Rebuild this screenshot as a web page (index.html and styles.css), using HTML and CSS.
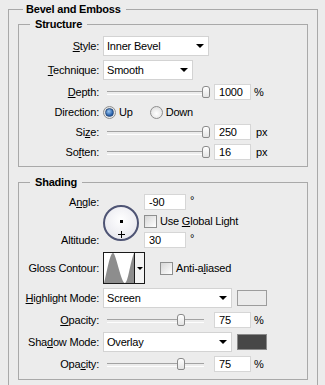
FILE: index.html
```html
<!DOCTYPE html>
<html>
<head>
<meta charset="utf-8">
<link rel="stylesheet" href="styles.css">
</head>
<body>
<fieldset class="group outer">
  <legend class="title">Bevel and Emboss</legend>

  <fieldset class="group sub structure">
    <legend class="subtitle">Structure</legend>
    <div class="form form-structure">
      <div class="lbl"><u>S</u>tyle:</div>
      <div class="ctl"><div class="select w-style"><span>Inner Bevel</span><i class="arrow"></i></div></div>

      <div class="lbl"><u>T</u>echnique:</div>
      <div class="ctl"><div class="select w-tech"><span>Smooth</span><i class="arrow"></i></div></div>

      <div class="lbl"><u>D</u>epth:</div>
      <div class="ctl"><div class="slider"><span class="thumb" style="left:99px"></span></div><div class="num">1000</div><span class="unit">%</span></div>

      <div class="lbl">Direction:</div>
      <div class="ctl"><span class="radio on"></span><span class="opt">Up</span><span class="radio second"></span><span class="opt">Down</span></div>

      <div class="lbl">Si<u>z</u>e:</div>
      <div class="ctl"><div class="slider"><span class="thumb" style="left:99px"></span></div><div class="num">250</div><span class="unit px">px</span></div>

      <div class="lbl">So<u>f</u>ten:</div>
      <div class="ctl"><div class="slider"><span class="thumb" style="left:99px"></span></div><div class="num">16</div><span class="unit px">px</span></div>
    </div>
  </fieldset>

  <fieldset class="group sub shading">
    <legend class="subtitle">Shading</legend>
    <div class="form form-shading">
      <div class="lbl stack"><span>A<u>n</u>gle:</span><span>Altitude:</span></div>
      <div class="ctl angle">
        <div class="dial"><i class="dot"></i><i class="cross"></i></div>
        <div class="angle-fields">
          <div class="field"><div class="num short">-90</div><span class="deg">°</span></div>
          <div class="check"><span class="box"></span><span>Use <u>G</u>lobal Light</span></div>
          <div class="field"><div class="num short">30</div><span class="deg">°</span></div>
        </div>
      </div>

      <div class="lbl">Gloss Contour:</div>
      <div class="ctl">
        <div class="contour">
          <svg class="curve" width="30" height="30" viewBox="0 0 30 30">
            <path d="M0 30 C3 18 6 0 9 0 C12 0 17 30 21 30 C24 30 26 10 30 0 L30 30 Z" fill="#8d8d8d"/>
          </svg>
          <span class="cdrop"><i class="arrow small"></i></span>
        </div>
        <div class="check aa"><span class="box"></span><span>Anti-a<u>l</u>iased</span></div>
      </div>

      <div class="lbl"><u>H</u>ighlight Mode:</div>
      <div class="ctl top"><div class="select w-mode"><span>Screen</span><i class="arrow"></i></div><span class="swatch light"></span></div>

      <div class="lbl"><u>O</u>pacity:</div>
      <div class="ctl"><div class="slider"><span class="thumb" style="left:74px"></span></div><div class="num">75</div><span class="unit">%</span></div>

      <div class="lbl">Sha<u>d</u>ow Mode:</div>
      <div class="ctl top"><div class="select w-mode"><span>Overlay</span><i class="arrow"></i></div><span class="swatch dark"></span></div>

      <div class="lbl">Opa<u>c</u>ity:</div>
      <div class="ctl"><div class="slider"><span class="thumb" style="left:74px"></span></div><div class="num">75</div><span class="unit">%</span></div>
    </div>
  </fieldset>
</fieldset>
</body>
</html>
```

FILE: styles.css
```css
* { box-sizing: border-box; }

html, body {
  margin: 0;
  padding: 0;
  background: #ececec;
}

body {
  width: 325px;
  height: 385px;
  overflow: hidden;
  font-family: "Liberation Sans", Arial, sans-serif;
  font-size: 11px;
  letter-spacing: -0.2px;
  color: #000;
}

u { text-decoration: underline; text-underline-offset: 1px; }

.group {
  border: 1px solid #a9a9a9;
  margin: 0;
  min-inline-size: 0;
}

.outer {
  width: 310px;
  margin: 2px 0 0 8px;
  padding: 1px 9px 5px;
  border-bottom-width: 0;
}

.title,
.subtitle {
  font-weight: bold;
  line-height: 14px;
}

.title {
  margin-left: 5px;
  padding: 0 5px 0 3px;
}

.subtitle {
  margin-left: 11px;
  padding: 0 5px;
}

.structure { padding: 5px 0 6px; }

.shading {
  margin-top: 8px;
  padding: 5px 0 7px;
}

.form {
  display: grid;
  grid-template-columns: 80px 1fr;
  column-gap: 4px;
  row-gap: 4px;
  align-items: center;
}

.form-structure { grid-template-rows: 20px 20px 16px 16px 16px 16px; }
.form-shading { grid-template-rows: 54px 32px 20px 16px 20px 16px; }

.lbl {
  text-align: right;
  white-space: nowrap;
  line-height: 16px;
}

.lbl.stack {
  height: 54px;
  display: flex;
  flex-direction: column;
  justify-content: space-between;
  align-items: flex-end;
}

.ctl {
  display: flex;
  align-items: center;
  height: 100%;
  white-space: nowrap;
}

.ctl.top { align-items: flex-start; }

/* select boxes */
.select {
  height: 20px;
  background: #fff;
  border: 1px solid #d3d3d3;
  display: flex;
  align-items: center;
  justify-content: space-between;
  padding: 0 4px 0 3px;
}

.w-style { width: 106px; }
.w-tech { width: 90px; }
.w-mode { width: 129px; }

.arrow {
  width: 0;
  height: 0;
  border-left: 4px solid transparent;
  border-right: 4px solid transparent;
  border-top: 4px solid #000;
}

.arrow.small {
  border-left-width: 3px;
  border-right-width: 3px;
  border-top-width: 3px;
}

/* sliders */
.slider {
  position: relative;
  width: 107px;
  height: 16px;
}

.slider::before {
  content: "";
  position: absolute;
  left: 4px;
  width: 97px;
  top: 7px;
  height: 2px;
  border-top: 1px solid #a3a3a3;
  border-bottom: 1px solid #fdfdfd;
}

.thumb {
  position: absolute;
  top: 2px;
  width: 8px;
  height: 12px;
  border: 1px solid #8a8a8a;
  border-radius: 3px 3px 2px 2px;
  background: linear-gradient(#ffffff, #e4e4e4);
}

/* number fields */
.num {
  width: 37px;
  height: 16px;
  margin-left: 4px;
  padding-left: 4px;
  background: #fff;
  border: 1px solid #d6d6d6;
  line-height: 14px;
}

.num.short {
  width: 42px;
  margin-left: 0;
}

.unit { margin-left: 3px; }
.unit.px { margin-left: 5px; }

.deg {
  margin-left: 4px;
  align-self: flex-start;
  line-height: 12px;
}

/* radios */
.radio {
  width: 13px;
  height: 13px;
  border-radius: 50%;
  border: 1px solid #8e8e8e;
  background: radial-gradient(circle at 50% 60%, #ffffff, #d8d8d8);
  display: inline-flex;
  align-items: center;
  justify-content: center;
}

.radio.on::after {
  content: "";
  width: 7px;
  height: 7px;
  border-radius: 50%;
  background: radial-gradient(circle at 40% 35%, #9cc8f2, #1f58a5 70%);
  border: 1px solid #2c4f7e;
}

.radio.second { margin-left: 17px; }

.opt { margin-left: 3px; }

/* checkboxes */
.check {
  display: flex;
  align-items: center;
  height: 14px;
}

.box {
  width: 13px;
  height: 13px;
  border: 1px solid #8e8f8f;
  background: linear-gradient(135deg, #d6d6d6, #ffffff);
  margin-right: 3px;
  flex: none;
}

.check.aa { margin-left: 15px; }

/* angle block */
.angle { align-items: flex-start; }

.dial {
  position: relative;
  width: 36px;
  height: 36px;
  margin-top: 11px;
  border-radius: 50%;
  border: 2px solid #4e5474;
  background: radial-gradient(circle at 50% 40%, #ffffff, #e2e2ea);
  flex: none;
}

.dot {
  position: absolute;
  left: 15px;
  top: 13px;
  width: 3px;
  height: 3px;
  background: #000;
}

.cross {
  position: absolute;
  left: 13px;
  top: 24px;
  width: 7px;
  height: 7px;
  background:
    linear-gradient(#000, #000) 3px 0 / 1px 7px no-repeat,
    linear-gradient(#000, #000) 0 3px / 7px 1px no-repeat;
}

.angle-fields {
  margin-left: 5px;
  height: 54px;
  display: flex;
  flex-direction: column;
  justify-content: space-between;
}

.field {
  display: flex;
  align-items: center;
  height: 16px;
}

/* contour */
.contour {
  display: flex;
  width: 42px;
  height: 32px;
  border: 1px solid #1a1a1a;
  background: #fff;
}

.curve {
  display: block;
  width: 30px;
  height: 30px;
  border-right: 1px solid #1a1a1a;
  box-sizing: content-box;
}

.cdrop {
  flex: 1;
  display: flex;
  align-items: center;
  justify-content: center;
  background: #f4f4f4;
}

/* colour swatches */
.swatch {
  width: 30px;
  height: 16px;
  margin-left: 5px;
  margin-top: 2px;
  border: 1px solid #9c9c9c;
}

.swatch.light { background: #ebebeb; }
.swatch.dark { background: #474747; border-color: #8a8a8a; }
```
